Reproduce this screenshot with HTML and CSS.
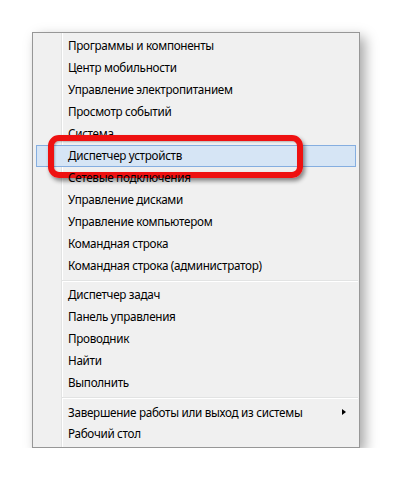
FILE: index.html
```html
<!DOCTYPE html>
<html lang="ru">
<head>
    <meta charset="UTF-8">
    <title>Меню Win+X</title>
    <link rel="stylesheet" href="styles.css">
</head>
<body>
    <div class="menu">
        <div class="item">Программы и компоненты</div>
        <div class="item">Центр мобильности</div>
        <div class="item">Управление электропитанием</div>
        <div class="item">Просмотр событий</div>
        <div class="item">Система</div>
        <div class="item active">
            Диспетчер устройств
            <span class="mark"></span>
        </div>
        <div class="item">Сетевые подключения</div>
        <div class="item">Управление дисками</div>
        <div class="item">Управление компьютером</div>
        <div class="item">Командная строка</div>
        <div class="item">Командная строка (администратор)</div>
        <div class="sep"></div>
        <div class="item">Диспетчер задач</div>
        <div class="item">Панель управления</div>
        <div class="item">Проводник</div>
        <div class="item">Найти</div>
        <div class="item">Выполнить</div>
        <div class="sep"></div>
        <div class="item sub">
            Завершение работы или выход из системы
            <span class="arrow"></span>
        </div>
        <div class="item">Рабочий стол</div>
    </div>
</body>
</html>
```

FILE: styles.css
```css
body {
    margin: 0;
    background: #fff;
    font-family: "Noto Sans", "Open Sans", sans-serif;
    font-size: 11.7px;
    letter-spacing: -0.3px;
    color: #000;
}
.menu {
    box-sizing: border-box;
    width: 328px;
    margin: 32px 0 0 32px;
    padding: 2px 0;
    border: 1px solid #979797;
    background:
        linear-gradient(to right, transparent 28px, #e2e3e3 28px, #e2e3e3 29px, #fff 29px, #fff 30px, transparent 30px),
        #f0f0f0;
    box-shadow: 5px 5px 12px rgba(0, 0, 0, 0.35);
}
.item {
    position: relative;
    box-sizing: border-box;
    height: 22px;
    line-height: 19px;
    margin: 0 3px;
    padding-left: 31px;
    border: 1px solid transparent;
    white-space: nowrap;
}
.item.active {
    background: #d6e5f5;
    border-color: #85aee0;
}
.sep {
    height: 1px;
    margin: 3px 1px 3px 29px;
    background: #e2e3e3;
    border-bottom: 1px solid #fff;
}
.sep + .item {
    margin-top: -1px;
}
.sub {
    display: flex;
    align-items: center;
    justify-content: space-between;
    padding-right: 9px;
}
.arrow {
    width: 0;
    height: 0;
    border-top: 3.5px solid transparent;
    border-bottom: 3.5px solid transparent;
    border-left: 4px solid #000;
}
.mark {
    position: absolute;
    left: 11px;
    top: -11px;
    box-sizing: border-box;
    width: 255px;
    height: 43px;
    border: 6px solid #ee1111;
    border-radius: 11px;
    box-shadow: 2px 3px 4px rgba(0, 0, 0, 0.45), inset 1px 1px 2px rgba(0, 0, 0, 0.25);
}
```
